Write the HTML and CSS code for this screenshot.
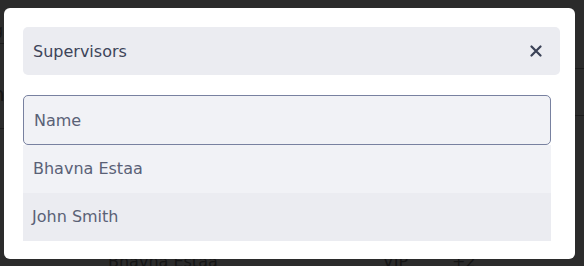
FILE: index.html
```html
<!DOCTYPE html>
<html lang="en">

<head>
    <meta charset="UTF-8">
    <meta name="viewport" content="width=device-width, initial-scale=1.0">
    <title>Supervisors</title>
    <link rel="stylesheet" href="styles.css">
</head>

<body>
    <!-- page behind the dialog -->
    <div class="page">
        <div class="page-left">
            <div class="page-title">g</div>
            <div class="page-rule"></div>
            <div class="page-heading">n</div>
            <div class="page-rule low"></div>
        </div>
        <div class="page-right">
            <div class="page-rule"></div>
            <div class="page-rule"></div>
        </div>
        <div class="page-row">
            <span class="cell-name">Bhavna Estaa</span>
            <span class="cell-tag">VIP</span>
            <span class="cell-count">+2</span>
        </div>
    </div>

    <div class="overlay">
        <div class="modal">
            <div class="modal-header">
                <span class="modal-title">Supervisors</span>
                <button class="close-button" aria-label="Close">
                    <svg width="12" height="12" viewBox="0 0 12 12">
                        <path d="M1.5 1.5 L10.5 10.5 M10.5 1.5 L1.5 10.5" stroke="#3a4156" stroke-width="2.2"
                            stroke-linecap="round" fill="none" />
                    </svg>
                </button>
            </div>
            <div class="picker">
                <input class="search" type="text" placeholder="Name">
                <div class="option">Bhavna Estaa</div>
                <div class="option hover">John Smith</div>
            </div>
        </div>
    </div>
</body>

</html>
```

FILE: styles.css
```css
/* Styles for the page */
body {
    font-family: "DejaVu Sans", sans-serif;
    margin: 0;
    padding: 0;
    width: 584px;
    height: 266px;
    overflow: hidden;
    background-color: #2b2b2b;
}

.page {
    position: relative;
    height: 266px;
    color: #151515;
}

.page-left {
    width: 4px;
    padding-top: 22px;
    overflow: hidden;
}

.page-title {
    font-size: 14px;
    height: 21px;
    margin-left: -6px;
}

.page-rule {
    height: 1px;
    background-color: #1c1c1c;
}

.page-heading {
    font-size: 20px;
    margin-top: 38px;
    margin-left: -8px;
    height: 46px;
}

.page-right {
    position: absolute;
    top: 68px;
    right: 0;
    width: 9px;
    display: flex;
    flex-direction: column;
    gap: 46px;
}

.page-row {
    position: absolute;
    top: 252px;
    left: 108px;
    font-size: 16px;
    display: flex;
}

.cell-tag {
    margin-left: 165px;
}

.cell-count {
    margin-left: 44px;
}

/* dialog */
.overlay {
    position: fixed;
    inset: 0;
    padding: 8px 9px 7px 4px;
}

.modal {
    height: 251px;
    background-color: #fff;
    border-radius: 6px;
    padding: 19px 15px 0 19px;
    box-sizing: border-box;
}

.modal-header {
    height: 48px;
    background-color: #ebecf1;
    border-radius: 5px;
    display: flex;
    align-items: center;
    justify-content: space-between;
    padding: 0 18px 0 10px;
}

.modal-title {
    font-size: 16px;
    color: #3d4459;
}

.close-button {
    background: none;
    border: none;
    padding: 0;
    width: 12px;
    height: 12px;
    display: flex;
    cursor: pointer;
}

.picker {
    margin-top: 20px;
    margin-right: 9px;
}

.search {
    display: block;
    width: 100%;
    height: 50px;
    box-sizing: border-box;
    border: 1px solid #7881a0;
    border-radius: 5px;
    background-color: #f1f2f6;
    padding: 0 10px;
    font-family: "DejaVu Sans", sans-serif;
    font-size: 16px;
    color: #3d4459;
    outline: none;
}

.search::placeholder {
    color: #5a6176;
}

.option {
    height: 48px;
    line-height: 48px;
    padding-left: 10px;
    font-size: 16px;
    color: #5a6176;
    background-color: #f1f2f6;
}

.option.hover {
    background-color: #ebecf1;
    padding-left: 9px;
}
```
